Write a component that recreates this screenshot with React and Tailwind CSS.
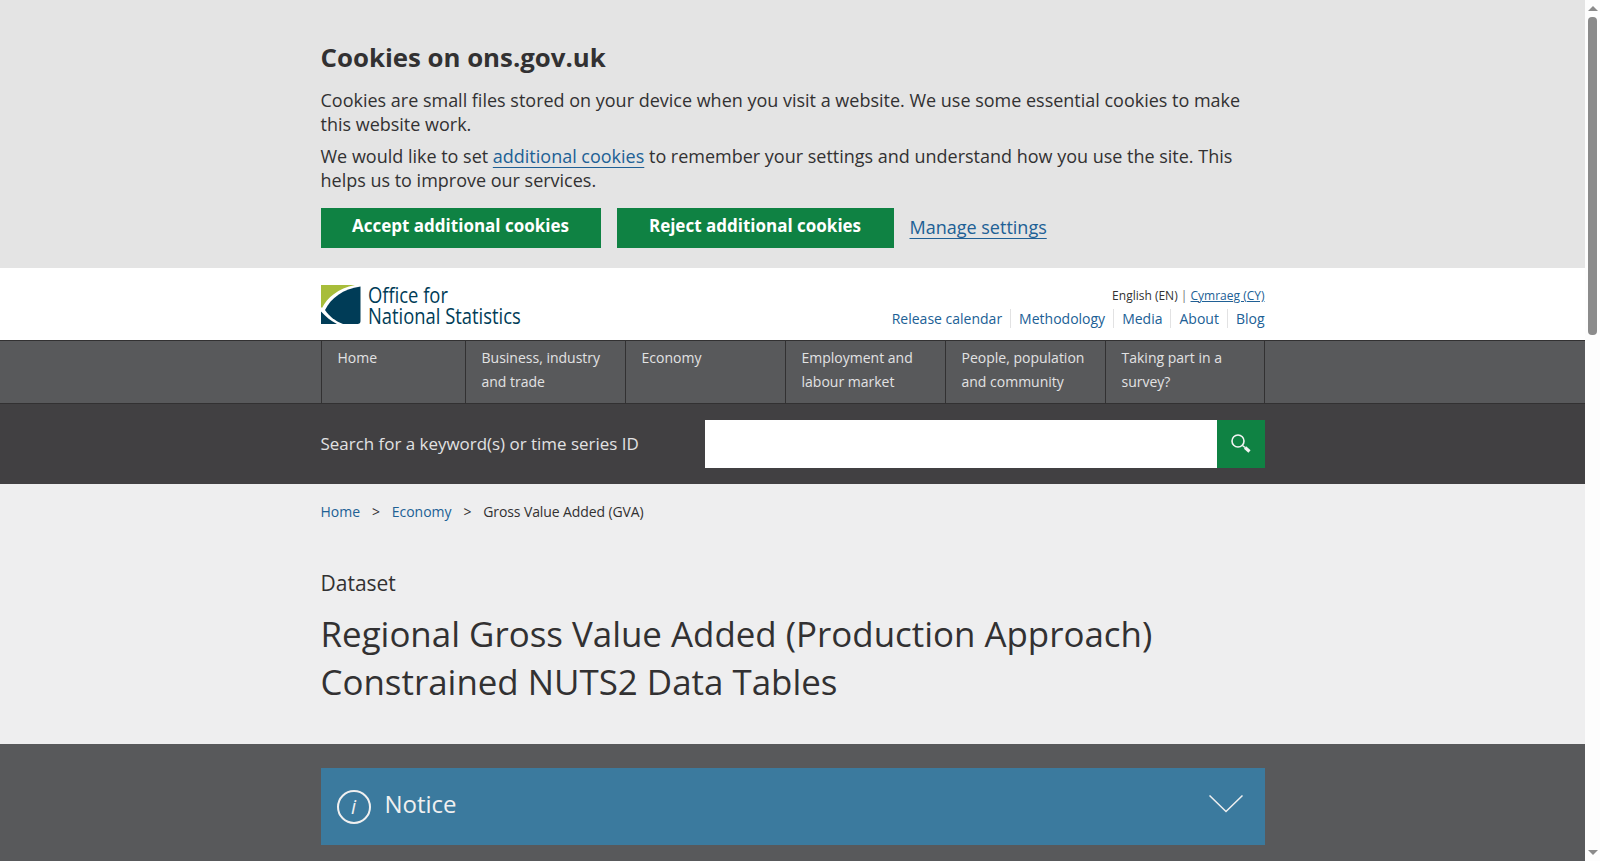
import React from "react";

const navItems = [
  { label: "Home", width: "w-[144px]" },
  { label: "Business, industry and trade", width: "w-[160px]" },
  { label: "Economy", width: "w-[160px]" },
  { label: "Employment and labour market", width: "w-[160px]" },
  { label: "People, population and community", width: "w-[160px]" },
  { label: "Taking part in a survey?", width: "w-[160px]" },
];

const topLinks = ["Release calendar", "Methodology", "Media", "About", "Blog"];

function Logo() {
  return (
    <div className="flex items-start gap-[7px]">
      <svg width="40" height="40" viewBox="0 0 40 40" className="shrink-0">
        <path d="M0 0H34C17 3 6 13 1 23L0 22Z" fill="#a8bd3a" />
        <path d="M39.500 1.500V36a3 3 0 0 1-3 3H22C14 36 8 31 4 25C10 13 22 4 39.500 1.500Z" fill="#003c57" />
        <path d="M0 26.500C5 32 10 36 16 39H0Z" fill="#003c57" />
      </svg>
      <div className="w-[152px] text-[#003c57] text-[21px] leading-[21px] whitespace-nowrap origin-left scale-x-[0.875]">
        <div>Office for</div>
        <div className="font-medium">National Statistics</div>
      </div>
    </div>
  );
}

function ScrollBar() {
  return (
    <div className="w-[15px] shrink-0 bg-[#fdfdfd] flex flex-col items-center">
      <div className="pt-[6px] h-[17px] shrink-0">
        <div className="w-0 h-0 border-x-[5px] border-x-transparent border-b-[5px] border-b-[#8b8b8b]" />
      </div>
      <div className="w-[9px] h-[318px] bg-[#8b8b8b] rounded-[4px]" />
      <div className="mt-auto pb-[6px]">
        <div className="w-0 h-0 border-x-[5px] border-x-transparent border-t-[5px] border-t-[#8b8b8b]" />
      </div>
    </div>
  );
}

export default function App() {
  return (
    <div className="h-screen flex overflow-hidden bg-[#fdfdfd] font-['Open_Sans',sans-serif] text-[#323132]">
      <div className="flex-1 min-w-0 overflow-hidden flex flex-col">
        {/* cookie banner */}
        <section className="h-[268px] shrink-0 bg-[#e4e4e4] pt-[40px]">
          <div className="w-[944px] mx-auto">
            <h2 className="text-[25.8px] leading-[34px] font-bold">Cookies on ons.gov.uk</h2>
            <p className="mt-[14px] text-[17.99px] leading-[24px]">
              Cookies are small files stored on your device when you visit a website. We use some essential cookies to make this website work.
            </p>
            <p className="mt-[8px] text-[17.99px] leading-[24px]">
              We would like to set{" "}
              <a className="text-[#206095] underline underline-offset-4 [text-decoration-skip-ink:none]">additional cookies</a> to remember your
              settings and understand how you use the site. This helps us to improve our services.
            </p>
            <div className="mt-[16px] flex items-center gap-[16px]">
              <button className="w-[280px] h-[40px] pb-[5px] bg-[#0f8243] text-white text-[17px] font-bold">
                Accept additional cookies
              </button>
              <button className="w-[277px] h-[40px] pb-[5px] bg-[#0f8243] text-white text-[17px] font-bold">
                Reject additional cookies
              </button>
              <a className="mb-[2px] text-[18px] leading-[24px] text-[#206095] underline underline-offset-4 [text-decoration-skip-ink:none]">Manage settings</a>
            </div>
          </div>
        </section>

        {/* header */}
        <header className="h-[72px] shrink-0 bg-white">
          <div className="w-[944px] mx-auto h-full flex justify-between">
            <div className="pt-[17px]">
              <Logo />
            </div>
            <div className="pt-[18px] flex flex-col items-end">
              <div className="mt-[1px] text-[12px] leading-[18px]">
                English (EN) <span className="text-[#707071]">|</span>{" "}
                <a className="text-[#206095] underline">Cymraeg (CY)</a>
              </div>
              <ul className="mt-[4px] flex text-[14px] leading-[19px] text-[#206095]">
                {topLinks.map((link, i) => (
                  <li key={link} className={i === 0 ? "pr-[8px]" : "px-[8px] last:pr-0 border-l border-[#e2e2e3]"}>
                    {link}
                  </li>
                ))}
              </ul>
            </div>
          </div>
        </header>

        {/* main nav */}
        <nav className="h-[64px] shrink-0 bg-[#58595b] border-y border-[#323132]">
          <ul className="w-[944px] mx-auto h-full flex border-r border-[#323132] text-[14px] leading-[24px] text-[#e2e2e3]">
            {navItems.map((item) => (
              <li key={item.label} className={`${item.width} shrink-0 border-l border-[#323132] px-[16px] pt-[5px]`}>
                {item.label}
              </li>
            ))}
          </ul>
        </nav>

        {/* search */}
        <section className="h-[80px] shrink-0 bg-[#414042]">
          <div className="w-[944px] mx-auto h-full flex items-center justify-between">
            <label className="text-[16.96px] text-[#e2e2e3]">Search for a keyword(s) or time series ID</label>
            <div className="flex">
              <input className="w-[512px] h-[48px] bg-white outline-none" />
              <button className="w-[48px] h-[48px] bg-[#0f8243] flex items-center justify-center">
                <svg width="20" height="20" viewBox="0 0 20 20" fill="none">
                  <circle cx="7" cy="7" r="6" stroke="#f4f4f4" strokeWidth="1.600" />
                  <path d="M11.500 11.500L14 13.500" stroke="#f4f4f4" strokeWidth="1.600" />
                  <path d="M14 13.500L18.500 17.500" stroke="#f4f4f4" strokeWidth="3.200" />
                </svg>
              </button>
            </div>
          </div>
        </section>

        {/* page title */}
        <section className="h-[260px] shrink-0 bg-[#eeeeef]">
          <div className="w-[944px] mx-auto">
            <div className="pt-[18px] flex gap-[11.800px] text-[14px] leading-[20px]">
              <a className="text-[#206095]">Home</a>
              <span>&gt;</span>
              <a className="text-[#206095]">Economy</a>
              <span>&gt;</span>
              <span className="tracking-[-0.1px]">Gross Value Added (GVA)</span>
            </div>
            <p className="mt-[46px] text-[21px] leading-[30px]">Dataset</p>
            <h1 className="mt-[12px] text-[34.9px] leading-[48px]">
              Regional Gross Value Added (Production Approach) Constrained NUTS2 Data Tables
            </h1>
          </div>
        </section>

        {/* notice */}
        <section className="flex-1 bg-[#58595b] pt-[24px]">
          <div className="w-[944px] h-[77px] mx-auto bg-[#3b7a9e] flex items-center pl-[16px] pr-[22px] text-[#f0f0f0]">
            <span className="w-[34px] h-[34px] rounded-full border-2 border-[#f0f0f0] flex items-center justify-center italic font-medium text-[20px]">
              i
            </span>
            <span className="ml-[14px] text-[24px] pb-[6px]">Notice</span>
            <svg className="ml-auto mb-[5px]" width="34" height="18" viewBox="0 0 34 18" fill="none">
              <path d="M0.500 0.500L17 16.500L33.500 0.500" stroke="#f0f0f0" strokeWidth="1.500" />
            </svg>
          </div>
        </section>
      </div>
      <ScrollBar />
    </div>
  );
}
